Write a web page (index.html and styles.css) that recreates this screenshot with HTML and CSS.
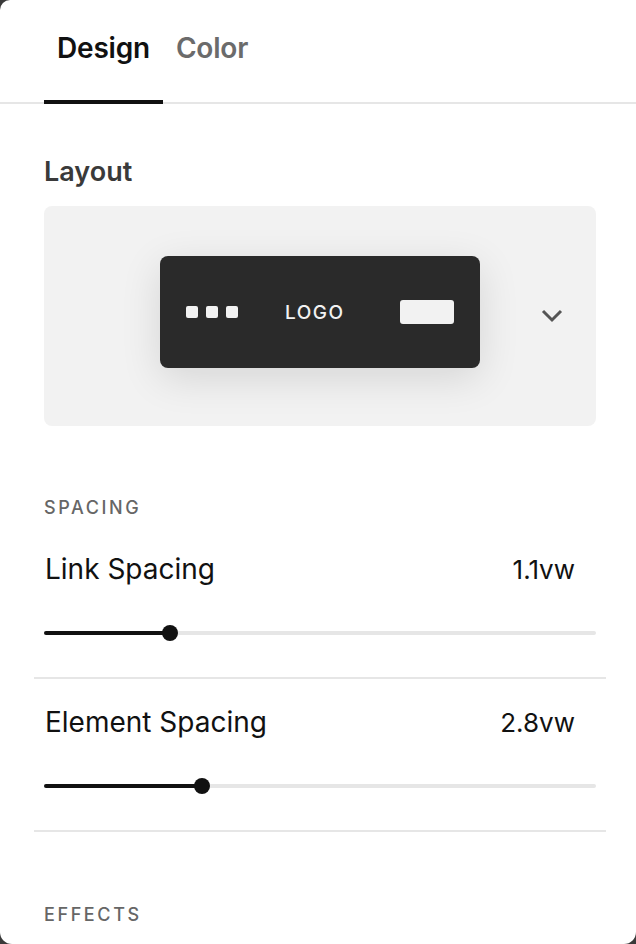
FILE: index.html
```html
<!DOCTYPE html>
<html lang="en">
<head>
<meta charset="utf-8">
<title>Header Design</title>
<link rel="stylesheet" href="styles.css">
</head>
<body>
<div class="panel">
  <nav class="tabs">
    <div class="tab active">Design</div>
    <div class="tab">Color</div>
  </nav>
  <main class="content">
    <section class="layout">
      <h2 class="title">Layout</h2>
      <div class="layout-box">
        <div class="preview">
          <div class="dots"><span></span><span></span><span></span></div>
          <div class="logo">LOGO</div>
          <div class="btn"></div>
        </div>
        <svg class="chevron" width="22" height="14" viewBox="0 0 22 14"><path d="M2 2 L11 11 L20 2" fill="none" stroke="#555" stroke-width="3"/></svg>
      </div>
    </section>
    <section class="group">
      <div class="caption">SPACING</div>
      <div class="control first">
        <div class="row"><span class="label">Link Spacing</span><span class="value">1.1vw</span></div>
        <div class="slider"><div class="fill" style="width:126px"></div><div class="thumb" style="left:118px"></div></div>
      </div>
      <div class="control">
        <div class="row"><span class="label">Element Spacing</span><span class="value">2.8vw</span></div>
        <div class="slider"><div class="fill" style="width:158px"></div><div class="thumb" style="left:150px"></div></div>
      </div>
    </section>
    <section class="group effects">
      <div class="caption">EFFECTS</div>
    </section>
  </main>
</div>
</body>
</html>
```
FILE: styles.css
```css
* { box-sizing: border-box; }
html, body { margin: 0; padding: 0; }
body {
  background: #3a3a3a;
  font-family: Inter, "Liberation Sans", sans-serif;
  width: 636px;
  height: 944px;
  overflow: hidden;
}
.panel {
  background: #fff;
  height: 944px;
  border-radius: 10px 0 12px 12px;
  overflow: hidden;
}
.tabs {
  display: flex;
  padding-left: 44px;
  border-bottom: 2px solid #e6e6e6;
  height: 104px;
}
.tab {
  font-size: 28px;
  font-weight: 600;
  color: #6b6b6b;
  padding: 31px 13px 0;
  letter-spacing: -0.2px;
}
.tab.active {
  color: #111;
  border-bottom: 4px solid #111;
  margin-bottom: -2px;
}
.content { padding: 0 40px 0 44px; }
.title {
  margin: 52px 0 0;
  font-size: 27px;
  font-weight: 600;
  color: #3a3a3a;
  line-height: 32px;
}
.layout-box {
  margin-top: 18px;
  height: 220px;
  background: #f2f2f2;
  border-radius: 8px;
  display: flex;
  align-items: center;
  padding-left: 116px;
  width: 552px;
}
.preview {
  width: 320px;
  height: 112px;
  background: #2a2a2a;
  border-radius: 8px;
  box-shadow: 0 10px 40px rgba(0,0,0,0.12);
  display: flex;
  align-items: center;
  padding: 0 26px;
  margin-top: -8px;
}
.dots { display: flex; gap: 8px; }
.dots span {
  width: 12px; height: 12px;
  background: #f2f2f2;
  border-radius: 2px;
}
.logo {
  margin-left: 47px;
  color: #f2f2f2;
  font-size: 19px;
  font-weight: 500;
  letter-spacing: 1.5px;
}
.btn {
  margin-left: auto;
  width: 54px; height: 24px;
  background: #f2f2f2;
  border-radius: 3px;
}
.chevron { margin-left: 61px; }
.group { margin-top: 72px; }
.caption {
  font-size: 18px;
  font-weight: 500;
  letter-spacing: 2.6px;
  color: #666;
  line-height: 20px;
}
.control {
  margin: 0 -10px;
  padding: 27px 10px 42px;
  border-bottom: 2px solid #e6e6e6;
}
.control.first { padding-top: 35px; }
.row {
  display: flex;
  justify-content: space-between;
  align-items: baseline;
  padding-right: 21px;
  color: #111;
  line-height: 32px;
}
.label { padding-left: 1px; font-size: 28px; }
.value { font-size: 26px; }
.slider {
  position: relative;
  margin-top: 45px;
  height: 4px;
  background: #e6e6e6;
  border-radius: 2px;
}
.fill {
  height: 4px;
  background: #111;
  border-radius: 2px;
}
.thumb {
  position: absolute;
  top: -6px;
  width: 16px; height: 16px;
  border-radius: 50%;
  background: #111;
}
.effects { margin-top: 73px; }
```
